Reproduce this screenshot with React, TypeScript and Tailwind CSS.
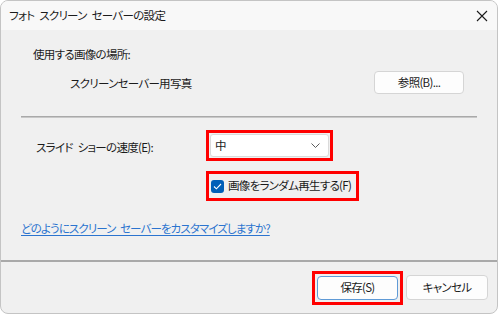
import { useState } from 'react';

const font = "font-['Noto_Sans_CJK_JP','Noto_Sans',sans-serif] [font-feature-settings:'palt']";

export default function App() {
    const [random, setRandom] = useState(true);

    return (
        <div className={`w-[500px] h-[315px] bg-white ${font} text-[11.5px] tracking-[-0.7px] [word-spacing:3px] text-[#1b1b1b] whitespace-nowrap`}>
            <div className="w-[498px] h-[314px] flex flex-col border border-[#c4c4c4] rounded-[8px] overflow-hidden bg-[#f0f0f0]">
                {/* title bar */}
                <div className="h-[29px] flex items-center justify-between bg-[#f8f8f8] pl-[8px] pr-[9px]">
                    <span className="leading-none">フォト スクリーン セーバーの設定</span>
                    <svg width="12" height="12" viewBox="0 0 12 12" className="text-[#1b1b1b]">
                        <path d="M1 1L11 11M11 1L1 11" stroke="currentColor" strokeWidth="1.1" fill="none" />
                    </svg>
                </div>

                {/* body */}
                <div className="flex-1 flex flex-col px-[20px]">
                    <div className="mt-[16px] ml-[12px] leading-[16px]">使用する画像の場所:</div>

                    <div className="mt-[9px] flex items-center justify-between">
                        <span className="ml-[49px] leading-[16px]">スクリーンセーバー用写真</span>
                        <button className="mr-[13px] w-[90px] h-[23px] bg-[#fdfdfd] border border-[#d5d5d5] rounded-[4px] leading-none">
                            参照(B)...
                        </button>
                    </div>

                    <div className="mt-[22px] h-[2px] bg-[#a9a9a9] border-b border-[#c8c8c8]" />

                    <div className="mt-[12px] flex items-center">
                        <span className="ml-[15px] w-[170px] leading-[16px] pt-[3px]">スライド ショーの速度(E):</span>
                        <div className="border-[3px] border-[#ff0000] p-px">
                            <div className="w-[119px] h-[23px] bg-white border border-[#dadada] rounded-[3px] flex items-center justify-between pl-[4px] pr-[8px]">
                                <span className="leading-none">中</span>
                                <svg width="9" height="5" viewBox="0 0 9 5">
                                    <path d="M0.5 0.5L4.5 4.5L8.5 0.5" stroke="#5c5c5c" strokeWidth="1" fill="none" />
                                </svg>
                            </div>
                        </div>
                    </div>

                    <div className="mt-[10px] ml-[185px] self-start border-[3px] border-[#ff0000] h-[30px] w-[153px] flex items-center pl-[2px]">
                        <button
                            onClick={() => setRandom(!random)}
                            className={`w-[13px] h-[13px] rounded-[3px] flex items-center justify-center ${random ? 'bg-[#005fb8]' : 'bg-white border border-[#888]'}`}
                        >
                            {random && (
                                <svg width="9" height="7" viewBox="0 0 9 7">
                                    <path d="M1 3.5L3.4 5.8L8 1" stroke="white" strokeWidth="1.1" fill="none" />
                                </svg>
                            )}
                        </button>
                        <span className="ml-[4px] leading-none">画像をランダム再生する(F)</span>
                    </div>

                    <a href="#" className="mt-[19px] leading-[16px] text-[#2b74cf] underline underline-offset-2 self-start tracking-[-0.9px]">
                        どのようにスクリーン セーバーをカスタマイズしますか?
                    </a>
                </div>

                {/* footer */}
                <div className="h-[2px] bg-[#a9a9a9]" />
                <div className="h-[51px] flex items-center justify-end pr-[9px] gap-[3px]">
                    <div className="border-[3px] border-[#ff0000] p-[2px]">
                        <button className="w-[81px] h-[24px] bg-[#fdfdfd] border border-[#5f9ad6] rounded-[4px] leading-none">
                            保存(S)
                        </button>
                    </div>
                    <button className="w-[82px] h-[25px] bg-[#fdfdfd] border border-[#d5d5d5] rounded-[4px] leading-none">
                        キャンセル
                    </button>
                </div>
            </div>
        </div>
    );
}
